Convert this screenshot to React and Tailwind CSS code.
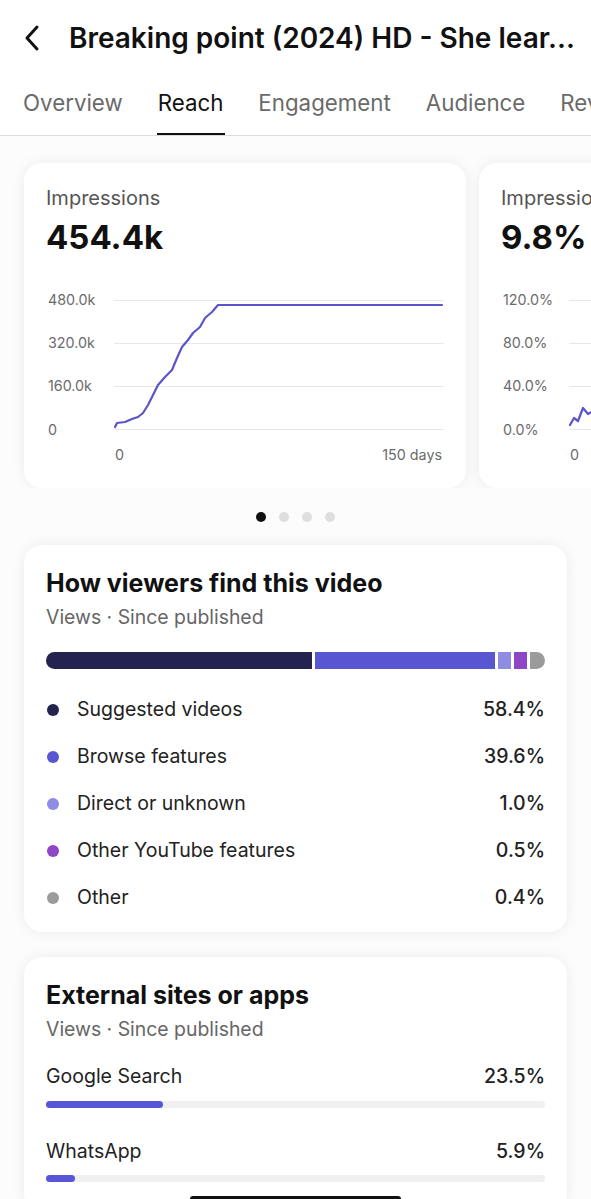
import React from 'react';

const font = { fontFamily: 'Inter, "Noto Sans", sans-serif' };

const sources = [
  { name: 'Suggested videos', value: '58.4%', color: 'bg-[#24234f]' },
  { name: 'Browse features', value: '39.6%', color: 'bg-[#5856d0]' },
  { name: 'Direct or unknown', value: '1.0%', color: 'bg-[#8e8ce3]' },
  { name: 'Other YouTube features', value: '0.5%', color: 'bg-[#8e45c6]' },
  { name: 'Other', value: '0.4%', color: 'bg-[#9b9b9b]' },
];

const linePoints = [
  [1, 137], [3, 133], [11, 132], [18, 129], [24, 127], [29, 123], [34, 115],
  [39, 105], [44, 95], [51, 87], [58, 80], [63, 68], [68, 57], [74, 50],
  [79, 43], [86, 37], [91, 28], [98, 22], [104, 15], [328, 15],
];

function Chart({ labels, xEnd, points }) {
  return (
    <div className="relative mt-[36px]">
      <div className="flex flex-col gap-[29.3px]">
        {labels.map((l) => (
          <div key={l} className="flex items-center h-[14px]">
            <span className="w-[68px] pl-[2px] text-[14.3px] text-[#6b6b6b] leading-none">{l}</span>
            <div className="flex-1 h-px bg-[#e8e8e8]" />
          </div>
        ))}
      </div>
      {points && (
        <svg className="absolute left-[68px] top-[-3px]" width="330" height="150" viewBox="0 0 330 150">
          <polyline
            points={points.map((p) => p.join(',')).join(' ')}
            fill="none"
            stroke="#5b55c9"
            strokeWidth="2.2"
            strokeLinejoin="round"
            strokeLinecap="round"
          />
        </svg>
      )}
      <div className="flex justify-between pl-[69px] pr-[2px] mt-[7px] text-[14.3px] text-[#6b6b6b]">
        <span>0</span>
        <span>{xEnd}</span>
      </div>
    </div>
  );
}

function MetricCard({ title, value, labels, xEnd, points }) {
  return (
    <div className="shrink-0 w-[442px] h-[325px] bg-white rounded-[18px] shadow-[0_0_14px_rgba(0,0,0,0.07)] px-[22px] pt-[23px]">
      <div className="text-[20px] text-[#555] leading-[24px]">{title}</div>
      <div className="text-[33px] font-bold text-[#111] leading-[40px] mt-[7px]">{value}</div>
      <Chart labels={labels} xEnd={xEnd} points={points} />
    </div>
  );
}

function Card({ children, className }) {
  return (
    <div className={`mx-[24px] bg-white rounded-[18px] shadow-[0_0_14px_rgba(0,0,0,0.07)] px-[22px] ${className}`}>
      {children}
    </div>
  );
}

function App() {
  return (
    <div className="w-[591px] h-[1199px] overflow-hidden bg-[#fcfcfc] relative" style={font}>
      <header className="bg-white">
        <div className="flex items-center h-[76px] pl-[22px]">
          <svg width="22" height="28" viewBox="0 0 22 28" fill="none">
            <path d="M15 3 L5 14 L15 25" stroke="#111" strokeWidth="3" strokeLinecap="round" strokeLinejoin="round" />
          </svg>
          <h1 className="ml-[25px] text-[28px] font-semibold text-[#111] whitespace-nowrap">
            Breaking point (2024) HD - She lear...
          </h1>
        </div>
        <nav className="flex h-[60px] border-b border-[#dcdcdc] pl-[23px] gap-[35px] overflow-hidden whitespace-nowrap text-[22.3px]">
          <span className="text-[#6a6a6a] pt-[10px]">Overview</span>
          <span className="text-[#111] pt-[10px] relative">
            Reach
            <span className="absolute left-[-1px] right-[-2px] bottom-[-1px] h-[3px] bg-[#111]" />
          </span>
          <span className="text-[#6a6a6a] pt-[10px]">Engagement</span>
          <span className="text-[#6a6a6a] pt-[10px]">Audience</span>
          <span className="text-[#6a6a6a] pt-[10px]">Revenue</span>
        </nav>
      </header>

      <div className="flex gap-[13px] pl-[24px] pt-[27px] overflow-hidden">
        <MetricCard
          title="Impressions"
          value="454.4k"
          labels={['480.0k', '320.0k', '160.0k', '0']}
          xEnd="150 days"
          points={linePoints}
        />
        <MetricCard
          title="Impressions click-through rate"
          value="9.8%"
          labels={['120.0%', '80.0%', '40.0%', '0.0%']}
          xEnd="150 days"
          points={[[1, 135], [5, 128], [9, 131], [14, 118], [19, 124], [26, 120]]}
        />
      </div>

      <div className="flex justify-center gap-[13px] mt-[24px] mb-[23px]">
        <span className="w-[10px] h-[10px] rounded-full bg-[#111]" />
        <span className="w-[10px] h-[10px] rounded-full bg-[#dedede]" />
        <span className="w-[10px] h-[10px] rounded-full bg-[#dedede]" />
        <span className="w-[10px] h-[10px] rounded-full bg-[#dedede]" />
      </div>

      <Card className="pt-[23px] pb-[22px]">
        <h2 className="text-[25px] font-bold text-[#111] leading-[30px]">How viewers find this video</h2>
        <div className="text-[19.4px] text-[#666] mt-[7px] leading-[24px]">Views · Since published</div>
        <div className="flex gap-[3px] h-[17px] mt-[23px]">
          <div className="w-[266px] bg-[#24234f] rounded-l-full" />
          <div className="w-[180px] bg-[#5856d0]" />
          <div className="w-[13px] bg-[#8e8ce3]" />
          <div className="w-[13px] bg-[#8e45c6]" />
          <div className="flex-1 bg-[#9b9b9b] rounded-r-full" />
        </div>
        <div className="mt-[28px] flex flex-col gap-[22px]">
          {sources.map((s) => (
            <div key={s.name} className="flex items-center h-[25px] text-[19.5px]">
              <span className={`w-[12px] h-[12px] rounded-full ${s.color} ml-[1px]`} />
              <span className="ml-[18px] text-[#222] flex-1">{s.name}</span>
              <span className="text-[#222] font-medium">{s.value}</span>
            </div>
          ))}
        </div>
      </Card>

      <Card className="mt-[25px] pt-[23px] pb-[30px]">
        <h2 className="text-[25px] font-bold text-[#111] leading-[30px]">External sites or apps</h2>
        <div className="text-[19.4px] text-[#666] mt-[7px] leading-[24px]">Views · Since published</div>
        <div className="mt-[23px]">
          <div className="flex justify-between text-[19.5px] text-[#222] leading-[25px]">
            <span>Google Search</span>
            <span className="font-medium">23.5%</span>
          </div>
          <div className="h-[7px] rounded-full bg-[#f0f0f0] mt-[12px]">
            <div className="h-full w-[23.5%] rounded-full bg-[#5856d6]" />
          </div>
        </div>
        <div className="mt-[31px]">
          <div className="flex justify-between text-[19.5px] text-[#222] leading-[25px]">
            <span>WhatsApp</span>
            <span className="font-medium">5.9%</span>
          </div>
          <div className="h-[7px] rounded-full bg-[#f0f0f0] mt-[11px]">
            <div className="h-full w-[5.9%] rounded-full bg-[#5856d6]" />
          </div>
        </div>
      </Card>

      <div className="absolute bottom-[-3px] left-[190px] w-[211px] h-[6px] rounded-full bg-[#111]" />
    </div>
  );
}

export default App;
